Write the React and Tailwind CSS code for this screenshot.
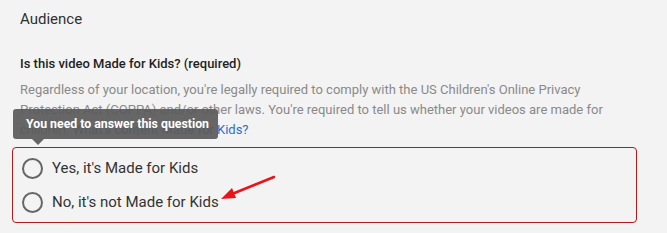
export default function App() {
    const options = ["Yes, it's Made for Kids", "No, it's not Made for Kids"];

    return (
        <div className="relative w-[667px] h-[233px] bg-[#f3f3f3] overflow-hidden font-['Roboto',sans-serif]">
            <div className="pt-[9px] pl-5">
                <h2 className="text-[15px] leading-5 text-[#303030]">Audience</h2>

                <h3 className="mt-[25px] text-[13px] leading-5 font-medium text-[#1f1f1f]">
                    Is this video Made for Kids? (required)
                </h3>

                <p className="mt-[6px] text-[13px] leading-5 text-[#8a8a8a]">
                    Regardless of your location, you're legally required to comply with the US Children's Online Privacy
                    <br />
                    Protection Act (COPPA) and/or other laws. You're required to tell us whether your videos are made for
                    <br />
                    children. <span className="text-[#2a6fc9]">What's content Made for Kids?</span>
                </p>
            </div>

            {/* Options */}
            <div className="ml-3 mt-[7px] w-[625px] h-[76px] border border-[#b31b1b] rounded-[4px] pt-[3px]">
                {options.map((label) => (
                    <label key={label} className="flex items-center h-[34px] pl-[9px]">
                        <span className="w-[21px] h-[21px] rounded-full border-2 border-[#666] shrink-0" />
                        <span className="ml-[9px] text-[15px] text-[#333]">{label}</span>
                    </label>
                ))}
            </div>

            {/* Tooltip */}
            <div className="absolute left-[13px] top-[109px] w-[205px] h-[30px] rounded-[3px] bg-[rgba(90,90,90,0.92)] flex items-center pl-[13px]">
                <span className="text-[12.3px] font-bold text-white">You need to answer this question</span>
                <span className="absolute left-[19px] top-[30px] w-0 h-0 border-l-[6px] border-r-[6px] border-t-[6px] border-l-transparent border-r-transparent border-t-[rgba(90,90,90,0.92)]" />
            </div>

            {/* Red arrow */}
            <svg className="absolute left-0 top-0" width="667" height="233" viewBox="0 0 667 233">
                <line x1="274" y1="177" x2="232" y2="194" stroke="#e8141a" strokeWidth="2.5" strokeLinecap="round" />
                <polygon points="221,199 232,188 236,198" fill="#e8141a" />
            </svg>
        </div>
    );
}
